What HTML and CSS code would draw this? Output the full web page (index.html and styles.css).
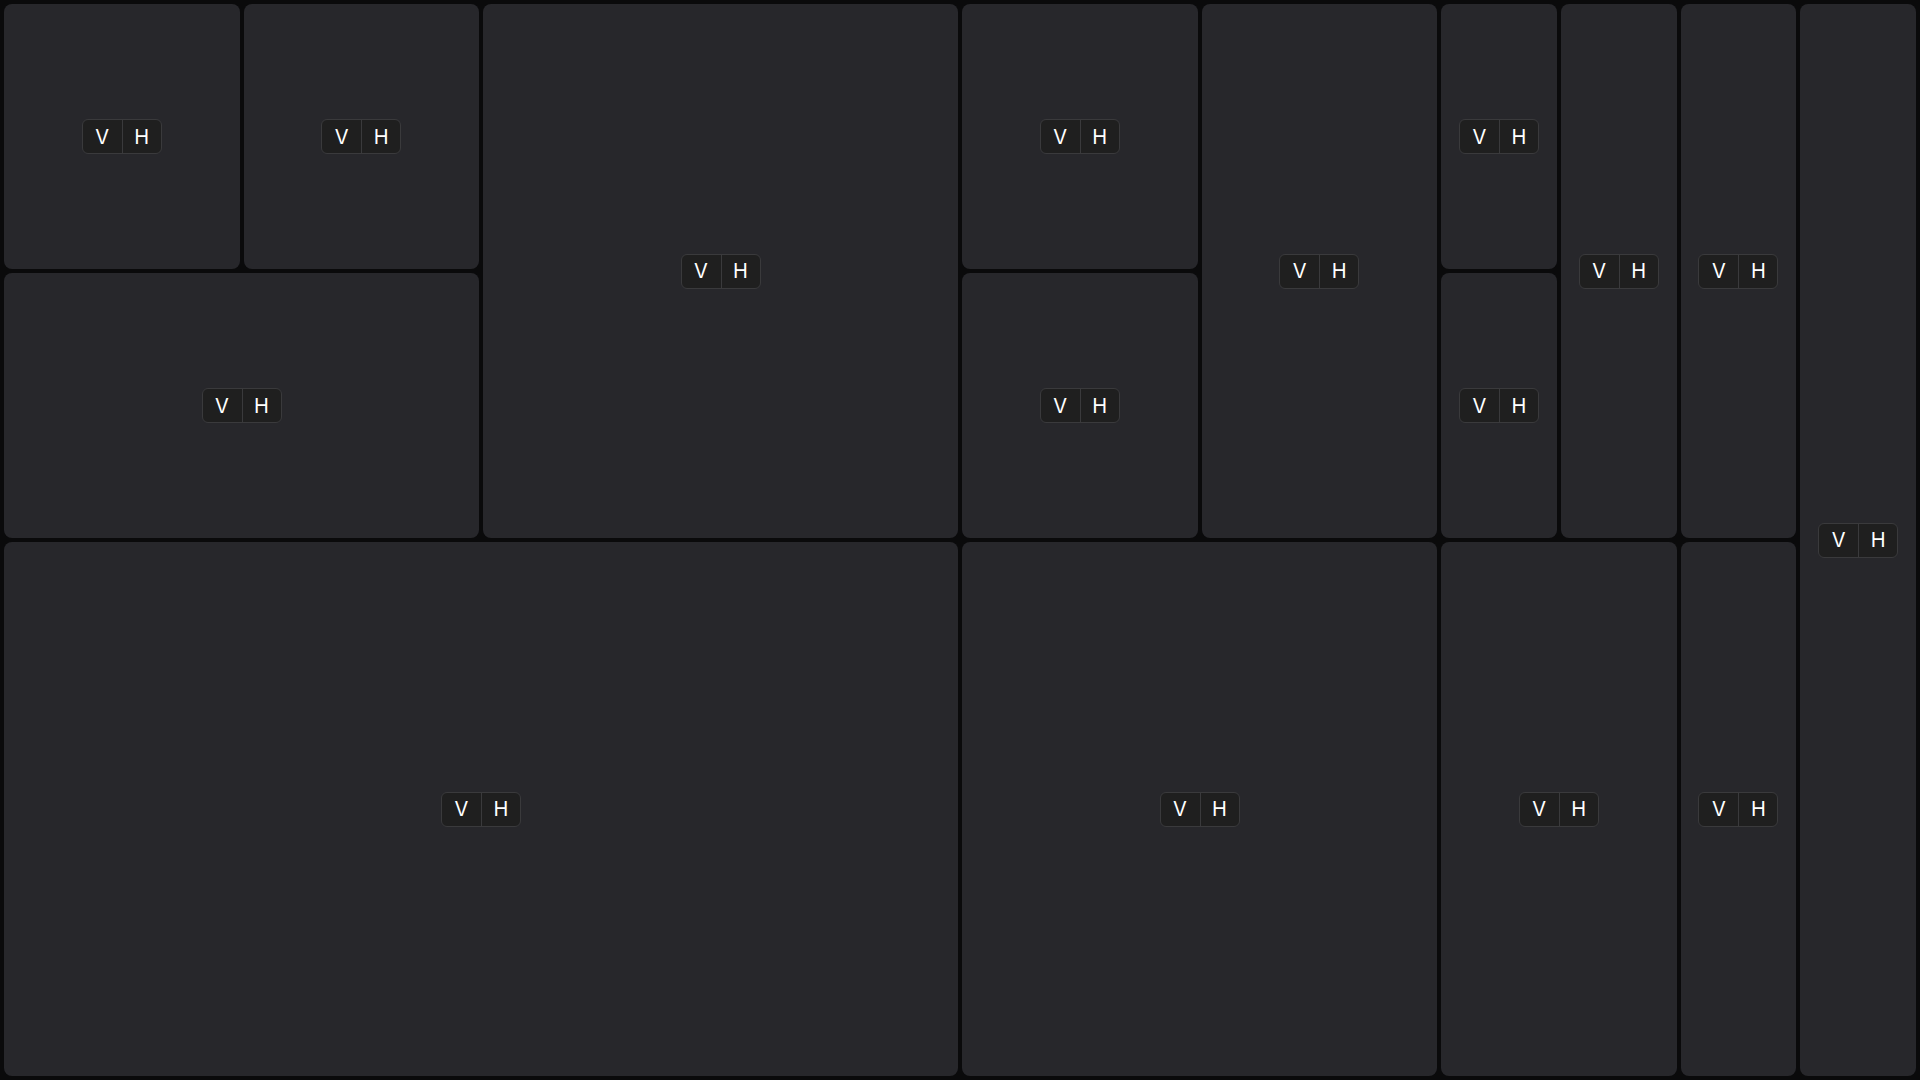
FILE: index.html
```html
<!DOCTYPE html>
<html lang="en">
<head>
<meta charset="utf-8">
<title>Split panes</title>
<link rel="stylesheet" href="styles.css">
</head>
<body>
<div class="split row root">
  <div class="split col">
    <div class="split row">
      <div class="split col">
        <div class="split row">
          <div class="pane"><div class="btns"><button class="btn">V</button><button class="btn">H</button></div></div>
          <div class="pane"><div class="btns"><button class="btn">V</button><button class="btn">H</button></div></div>
        </div>
        <div class="pane"><div class="btns"><button class="btn">V</button><button class="btn">H</button></div></div>
      </div>
      <div class="pane"><div class="btns"><button class="btn">V</button><button class="btn">H</button></div></div>
    </div>
    <div class="pane"><div class="btns"><button class="btn">V</button><button class="btn">H</button></div></div>
  </div>
  <div class="split row">
    <div class="split col">
      <div class="split row">
        <div class="split col">
          <div class="pane"><div class="btns"><button class="btn">V</button><button class="btn">H</button></div></div>
          <div class="pane"><div class="btns"><button class="btn">V</button><button class="btn">H</button></div></div>
        </div>
        <div class="pane"><div class="btns"><button class="btn">V</button><button class="btn">H</button></div></div>
      </div>
      <div class="pane"><div class="btns"><button class="btn">V</button><button class="btn">H</button></div></div>
    </div>
    <div class="split row">
      <div class="split col">
        <div class="split row">
          <div class="split col">
            <div class="pane"><div class="btns"><button class="btn">V</button><button class="btn">H</button></div></div>
            <div class="pane"><div class="btns"><button class="btn">V</button><button class="btn">H</button></div></div>
          </div>
          <div class="pane"><div class="btns"><button class="btn">V</button><button class="btn">H</button></div></div>
        </div>
        <div class="pane"><div class="btns"><button class="btn">V</button><button class="btn">H</button></div></div>
      </div>
      <div class="split row">
        <div class="split col">
          <div class="pane"><div class="btns"><button class="btn">V</button><button class="btn">H</button></div></div>
          <div class="pane"><div class="btns"><button class="btn">V</button><button class="btn">H</button></div></div>
        </div>
        <div class="pane"><div class="btns"><button class="btn">V</button><button class="btn">H</button></div></div>
      </div>
    </div>
  </div>
</div>
</body>
</html>
```
FILE: styles.css
```css
* { box-sizing: border-box; }
html, body {
  margin: 0;
  height: 100%;
  background: #0a0a0b;
  font-family: Inter, "Liberation Sans", sans-serif;
}
.root {
  width: 100vw;
  height: 100vh;
  padding: 4px;
}
.split {
  display: flex;
  gap: 4px;
  flex: 1 1 0;
  min-width: 0;
  min-height: 0;
}
.row { flex-direction: row; }
.col { flex-direction: column; }
.pane {
  flex: 1 1 0;
  min-width: 0;
  min-height: 0;
  background: #27272b;
  border-radius: 8px;
  display: flex;
  align-items: center;
  justify-content: center;
}
.btns {
  display: flex;
  border: 1px solid #3a3a3c;
  border-radius: 6px;
  background: #1f1f1f;
  overflow: hidden;
}
.btn {
  width: 39px;
  height: 33px;
  border: none;
  background: transparent;
  color: #ffffff;
  font-family: Inter, "Liberation Sans", sans-serif;
  font-size: 20px;
  padding: 0;
  display: flex;
  align-items: center;
  justify-content: center;
}
.btn + .btn { border-left: 1px solid #3a3a3c; }
```
